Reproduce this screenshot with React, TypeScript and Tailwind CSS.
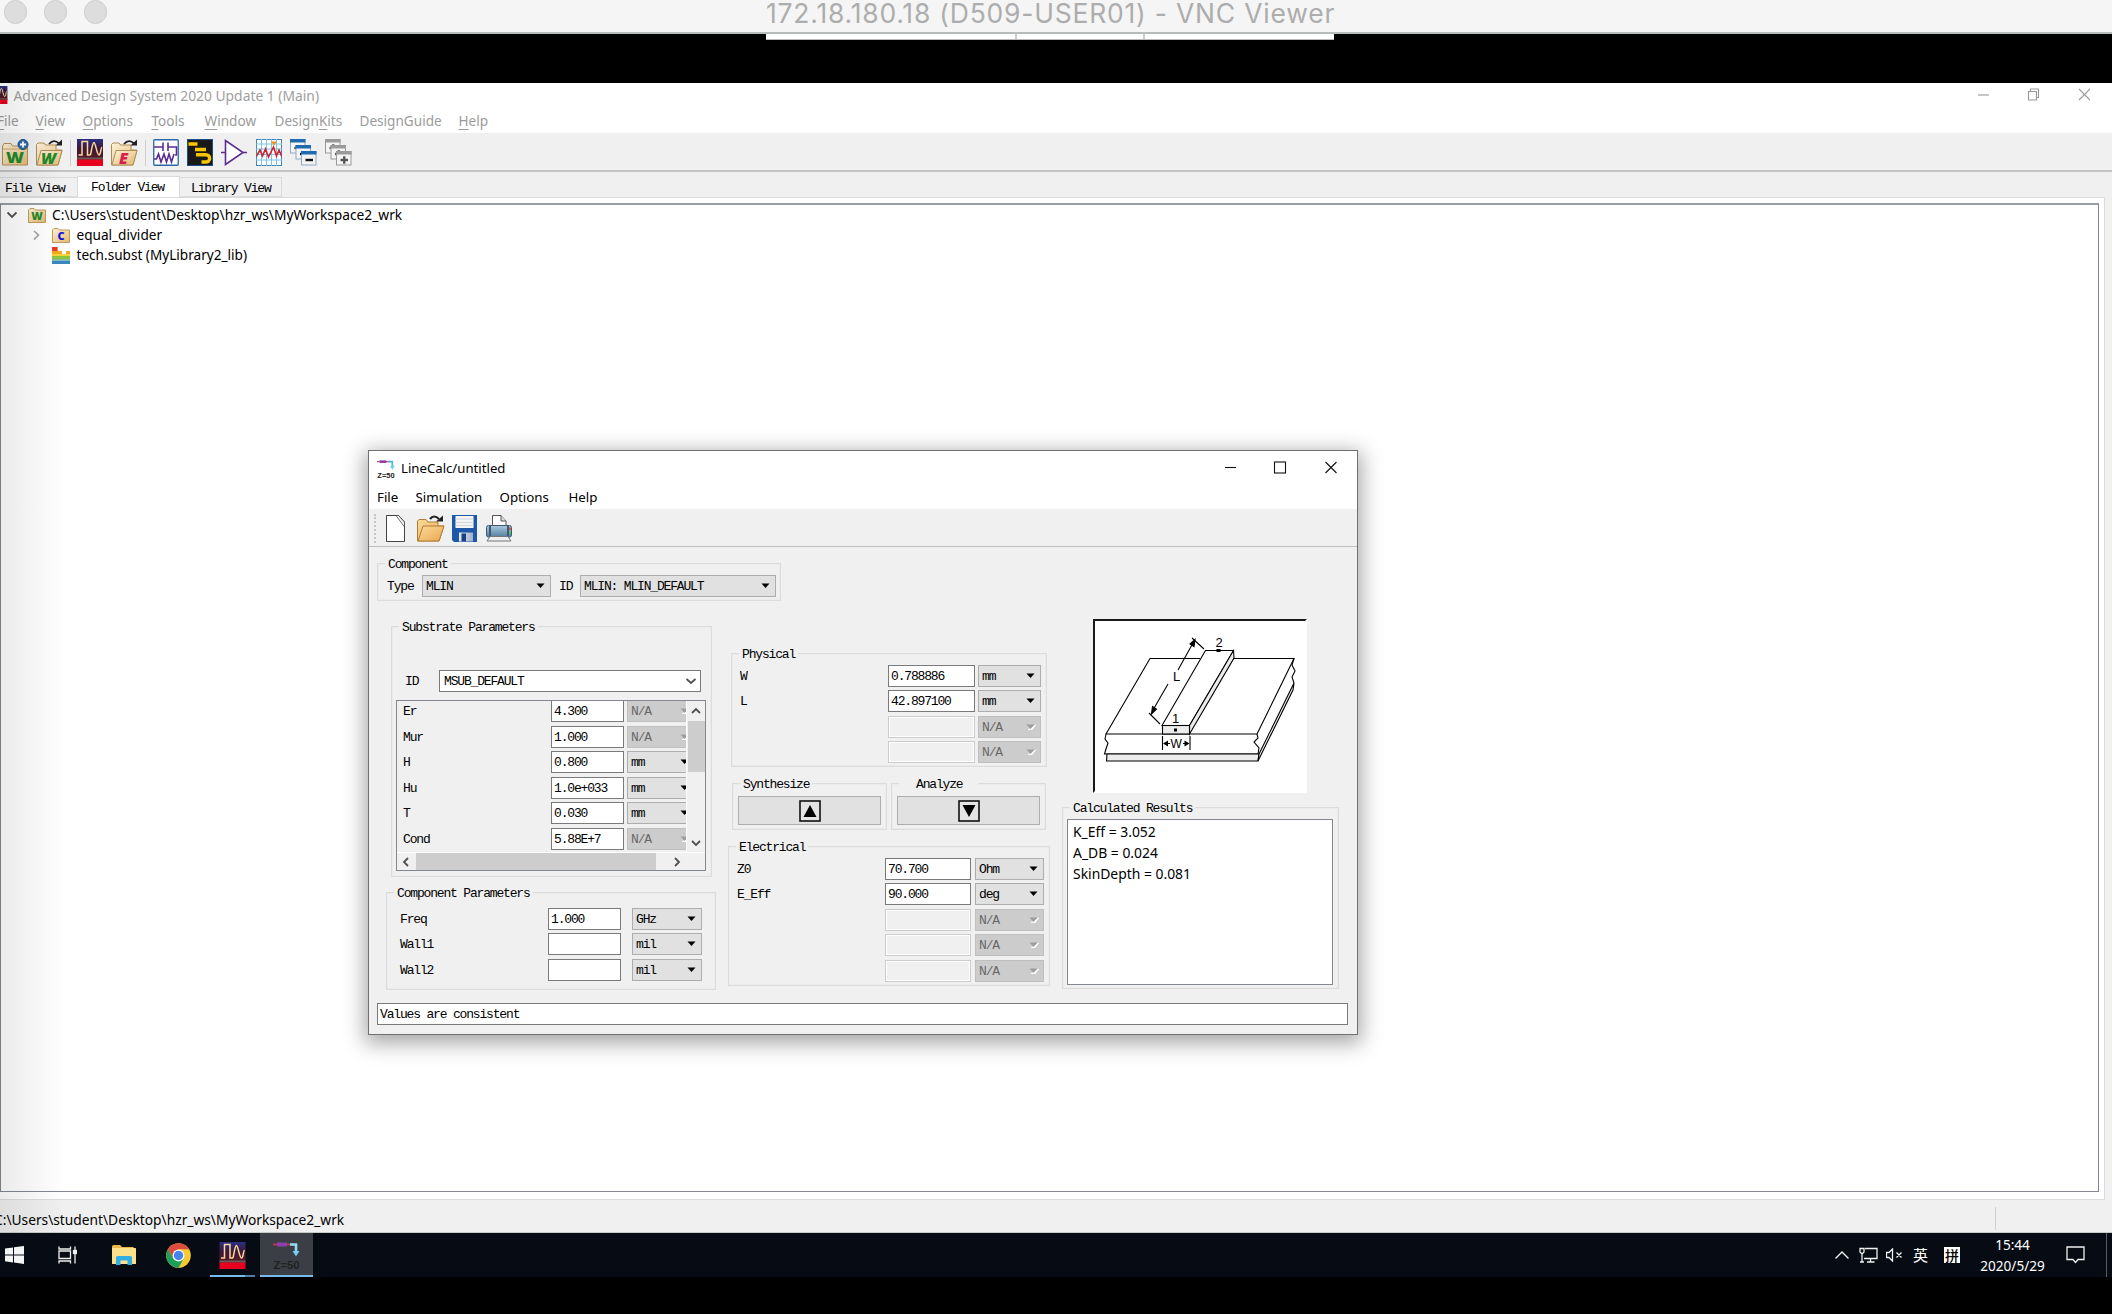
import React from "react";

const MONO = "block pt-[2px] font-['Liberation_Mono',monospace] text-[13px] tracking-[-1.17px] leading-[16px] whitespace-pre text-black";
const UI = "font-['Noto_Sans',sans-serif] leading-[20px] whitespace-pre";

function Arrow({ disabled = false }: { disabled?: boolean }) {
  return (
    <svg width="10" height="6" viewBox="0 0 10 6" className="shrink-0">
      {disabled && <path d="M2 6 L9.5 1 L6 5.8 Z" fill="#fff" stroke="#fff" />}
      <path d="M0.5 0.5 H8.5 L4.5 5 Z" fill={disabled ? "#9d9d9d" : "#000"} />
    </svg>
  );
}

function Select({ text, className, disabled = false }: { text: string; className: string; disabled?: boolean }) {
  return (
    <div
      className={
        "flex h-[22px] shrink-0 items-center justify-between border pl-[3px] pr-[4px] " +
        (disabled ? "border-[#bfbfbf] bg-[#cccccc] " : "border-[#adadad] bg-[#e1e1e1] ") +
        className
      }
    >
      <span className={MONO + (disabled ? " opacity-50" : "")}>{text}</span>
      <Arrow disabled={disabled} />
    </div>
  );
}

function Input({ text = "", className, disabled = false }: { text?: string; className: string; disabled?: boolean }) {
  return (
    <div
      className={
        "flex h-[22px] shrink-0 items-center border pl-[2px] " +
        (disabled ? "border-[#cccccc] bg-[#f0f0f0] shadow-[inset_0_0_0_1px_#fff] " : "border-[#7a7a7a] bg-white ") +
        className
      }
    >
      <span className={MONO}>{text}</span>
    </div>
  );
}

function Group({
  title,
  className,
  titleClass = "ml-[7px] px-[3px]",
  children,
}: {
  title: string;
  className: string;
  titleClass?: string;
  children: React.ReactNode;
}) {
  return (
    <div className={"flex shrink-0 flex-col border border-[#dcdcdc] shadow-[inset_0_0_0_0.5px_#e6e6e6] " + className}>
      <div className={"-mt-[9px] h-[16px] w-fit bg-[#f0f0f0] " + titleClass}>
        <span className={MONO}>{title}</span>
      </div>
      {children}
    </div>
  );
}

type RowData = { label: string; value?: string; unit: string; disabled?: boolean; unitDisabled?: boolean };

function Row({ r, inputW, gap, selectW }: { r: RowData; inputW: string; gap: string; selectW: string }) {
  return (
    <div className="mb-[3.4px] flex h-[22px] items-center">
      <span className={MONO + " flex-1"}>{r.label}</span>
      <Input text={r.value} className={inputW} disabled={r.disabled} />
      <div className={gap} />
      <Select text={r.unit} className={selectW} disabled={r.disabled || r.unitDisabled} />
    </div>
  );
}

const substrate: RowData[] = [
  { label: "Er", value: "4.300", unit: "N/A", unitDisabled: true },
  { label: "Mur", value: "1.000", unit: "N/A", unitDisabled: true },
  { label: "H", value: "0.800", unit: "mm" },
  { label: "Hu", value: "1.0e+033", unit: "mm" },
  { label: "T", value: "0.030", unit: "mm" },
  { label: "Cond", value: "5.88E+7", unit: "N/A", unitDisabled: true },
];
const component: RowData[] = [
  { label: "Freq", value: "1.000", unit: "GHz" },
  { label: "Wall1", unit: "mil" },
  { label: "Wall2", unit: "mil" },
];
const physical: RowData[] = [
  { label: "W", value: "0.788886", unit: "mm" },
  { label: "L", value: "42.897100", unit: "mm" },
  { label: "", unit: "N/A", disabled: true },
  { label: "", unit: "N/A", disabled: true },
];
const electrical: RowData[] = [
  { label: "Z0", value: "70.700", unit: "Ohm" },
  { label: "E_Eff", value: "90.000", unit: "deg" },
  { label: "", unit: "N/A", disabled: true },
  { label: "", unit: "N/A", disabled: true },
  { label: "", unit: "N/A", disabled: true },
];

/* ---------- icons ---------- */

function Gradients() {
  return (
    <svg width="0" height="0" className="absolute">
      <defs>
        <linearGradient id="folder" x1="0" y1="0" x2="1" y2="1">
          <stop offset="0" stopColor="#fdf3dc" />
          <stop offset="1" stopColor="#e3b870" />
        </linearGradient>
        <linearGradient id="orange" x1="0" y1="0" x2="1" y2="1">
          <stop offset="0" stopColor="#fbdb9a" />
          <stop offset="1" stopColor="#e9a750" />
        </linearGradient>
        <linearGradient id="ads" x1="0" y1="0" x2="0" y2="1">
          <stop offset="0" stopColor="#2b2f86" />
          <stop offset="0.45" stopColor="#3d1836" />
          <stop offset="1" stopColor="#5a1a22" />
        </linearGradient>
        <linearGradient id="printer" x1="0" y1="0" x2="0" y2="1">
          <stop offset="0" stopColor="#a9c9df" />
          <stop offset="1" stopColor="#54809f" />
        </linearGradient>
        <linearGradient id="paper" x1="0" y1="1" x2="1" y2="0">
          <stop offset="0.55" stopColor="#fff" />
          <stop offset="1" stopColor="#9a9a9a" />
        </linearGradient>
        <linearGradient id="metal" x1="0" y1="0" x2="1" y2="0">
          <stop offset="0" stopColor="#e6eaf0" />
          <stop offset="1" stopColor="#9fb0cc" />
        </linearGradient>
      </defs>
    </svg>
  );
}

function WorkspaceNew() {
  return (
    <svg width="27" height="27" viewBox="0 0 27 27">
      <path d="M0.5 26 V7 L2 4.500 H9 L10.500 7 H25.500 V26 Z" fill="url(#folder)" stroke="#b08d55" />
      <path d="M1 10 H25" stroke="#c9a76a" />
      <text x="4" y="23.500" fontFamily="Open Sans" fontWeight="800" fontSize="16.500" fill="#1f8a2c" textLength="18" lengthAdjust="spacingAndGlyphs">W</text>
      <circle cx="21" cy="5.500" r="5" fill="#2f6ea8" stroke="#1f4f80" />
      <path d="M21 2.500 V8.500 M18 5.500 H24" stroke="#fff" strokeWidth="1.800" />
    </svg>
  );
}

function FolderOpen({ letter, color }: { letter: string; color: string }) {
  return (
    <svg width="27" height="27" viewBox="0 0 27 27">
      <path d="M0.5 26 V5.500 L2 4 H8 L9.500 6 H20 V11 L26 11 L22 26 Z" fill="url(#folder)" stroke="#b08d55" />
      <path d="M1 26 L5 11.500 H26 L22 26 Z" fill="url(#folder)" stroke="#b08d55" />
      <text x={letter === "W" ? 5 : 8} y="25" fontFamily="Open Sans" fontWeight="800" fontStyle="italic" fontSize="16" fill={color}>{letter}</text>
      <path d="M13 5 Q18 -0.500 23 4.500" fill="none" stroke="#222" strokeWidth="1.800" />
      <path d="M19.500 6.500 H26 V0.500 Z" fill="#222" />
    </svg>
  );
}

function AdsIcon({ size = "h-[27px] w-[26px]" }: { size?: string }) {
  return (
    <svg viewBox="0 0 26 27" className={size}>
      <rect width="26" height="21" fill="url(#ads)" />
      <rect y="18.500" width="26" height="2" fill="#6b5a5a" />
      <rect y="20.500" width="26" height="6.500" fill="#e8001f" />
      <path d="M1.500 16 H5 V2.500 H10.500 V16 H13.500" fill="none" stroke="#f7d9a0" strokeWidth="1.500" />
      <path d="M13.500 16 C15 9 15.500 3.500 17 3.500 S20 16 22 16 S23.500 9 25 8" fill="none" stroke="#f7d9a0" strokeWidth="1.500" />
    </svg>
  );
}

function Schematic() {
  return (
    <svg width="26" height="27" viewBox="0 0 26 27">
      <rect x="0.750" y="0.750" width="24.500" height="25.500" rx="1" fill="#fff" stroke="#2a67a8" strokeWidth="1.300" />
      <path d="M1 8 H10 M10 3.500 V12 M15 3.500 V12 M15 8 H23.500 V16 H22 M1 20 H3.500 L5.500 15 L8 23 L11 15 L13.500 23 L16 15 L18.500 23 L21 15" fill="none" stroke="#5a2c91" strokeWidth="1.600" />
    </svg>
  );
}

function Layout() {
  return (
    <svg width="26" height="27" viewBox="0 0 26 27">
      <rect width="26" height="27" fill="#191919" />
      <rect width="25" height="26" x="0.500" y="0.500" fill="none" stroke="#1d4f8a" />
      <path d="M1.500 5 H10.500 M8 10.500 H19" stroke="#f7c600" strokeWidth="3.400" />
      <path d="M9 15.700 H19 A3.600 3.600 0 0 1 19 23 H14.500" fill="none" stroke="#f7c600" strokeWidth="3.400" />
    </svg>
  );
}

function Amp() {
  return (
    <svg width="26" height="27" viewBox="0 0 26 27">
      <path d="M4.500 1.500 V25.500 L22 13.500 Z" fill="#fff" stroke="#5a2c91" strokeWidth="1.600" />
      <path d="M0 13.500 H4.500 M22 13.500 H26" stroke="#5a2c91" strokeWidth="1.600" />
    </svg>
  );
}

function DataDisplay() {
  return (
    <svg width="26" height="27" viewBox="0 0 26 27">
      <rect x="0.500" y="0.500" width="25" height="26" fill="#fff" stroke="#3d86b8" />
      <path d="M5.500 0 V27 M10.500 0 V27 M15.500 0 V27 M20.500 0 V27 M0 5 H26 M0 10 H26 M0 15.500 H26 M0 21 H26" stroke="#7cc3e4" />
      <path d="M0.500 17 L4 11 L6.500 17 L9.500 10 L12.500 18 L17.500 8 L20.500 17 L23 11 L25.500 17" fill="none" stroke="#d0202c" strokeWidth="1.600" />
      <path d="M15 2.500 H21 L18 6.500 Z" fill="#f28c1a" />
    </svg>
  );
}

function Cascade({ color, plus }: { color: string; plus?: boolean }) {
  return (
    <svg width="27" height="27" viewBox="0 0 27 27">
      {[
        [0.5, 0.5],
        [6, 6.5],
        [11.5, 12.5],
      ].map(([x, y], i) => (
        <g key={i}>
          <rect x={x} y={y} width="14.500" height="13.500" fill="#f4f4f4" stroke={plus ? "#9a9a9a" : "#8fa9c4"} />
          <rect x={x - 0.5} y={y - 0.5} width="15.500" height="3.500" fill={color} />
          <path d={`M${x + 4} ${y + 8.5} h7.500`} stroke={plus ? "#555" : "#111"} strokeWidth="2.400" />
          {plus && <path d={`M${x + 7.75} ${y + 4.75} v7.500`} stroke="#555" strokeWidth="2.400" />}
        </g>
      ))}
    </svg>
  );
}

function LineCalcIcon({ dark = false, size }: { dark?: boolean; size: string }) {
  return (
    <svg viewBox="0 0 27 27" className={size}>
      <path d="M0 2.500 H21" stroke="#d8344c" strokeWidth="1.600" />
      <rect x="4" y="0.500" width="10" height="4" fill="#8b3fb0" />
      <path d="M17 2.500 H23 V9" fill="none" stroke={dark ? "#8fdcf5" : "#4db4dc"} strokeWidth="2.600" />
      <path d="M19.500 9 H26.500 L23 14.500 Z" fill="#6fd0f0" />
      <text x="0.500" y="26.500" fontFamily="Liberation Sans" fontWeight="700" fontSize="11" fill="#222" textLength="26" lengthAdjust="spacingAndGlyphs">Z=50</text>
    </svg>
  );
}

function Microstrip() {
  return (
    <svg width="211" height="170" viewBox="0 0 211 170" fill="none" stroke="#000" strokeWidth="1.100">
      <path d="M11 113 L55 37.500 H105 M138 37.500 H199 L162 113" />
      <path d="M162 113 H11 L10 118 L13 122 L11 128 L9.500 133 H163 L164 127 L159 121 L163 117 L162 113" />
      <path d="M12 133 L11.500 140 H163 L164 133 Z" fill="#ececec" />
      <path d="M164 133 L199 62 L198 69 L163 140 Z" fill="#ececec" />
      <path d="M199 37.500 L197 44 L200 50 L197 56 L199 62" />
      <path d="M67 104.500 L110.500 29.500 H138.500 L94.500 104.500 Z" fill="#fff" />
      <path d="M94.500 104.500 L138.500 29.500 L139 37 L94.500 113 Z" fill="#ececec" />
      <rect x="67.500" y="104.500" width="27" height="8.500" fill="#ececec" />
      <rect x="79" y="107.500" width="3" height="3" fill="#000" stroke="none" />
      <rect x="121.500" y="28" width="4" height="3" fill="#000" stroke="none" />
      <path d="M67.500 115 V129 M95 115 V129 M70 122.500 H75 M88 122.500 H93" />
      <path d="M68 122.500 L73 119.500 V125.500 Z M94.500 122.500 L89.500 119.500 V125.500 Z" fill="#000" stroke="none" />
      <path d="M83 49 L98 22 M73 63 L58 89" />
      <path d="M100 18.500 L99 25.500 L95 23 Z M56.500 93 L57.500 85.500 L61.500 88 Z" fill="#000" />
      <path d="M97 17 L109 28 M54 92 L65 103" />
      <g fill="#000" stroke="none" fontFamily="Liberation Sans" fontSize="13">
        <text x="78" y="60">L</text>
        <text x="120.500" y="25.500">2</text>
        <text x="77" y="101.500">1</text>
        <text x="75.500" y="127" fontSize="12">W</text>
      </g>
    </svg>
  );
}

function Chevron({ d, className = "" }: { d: string; className?: string }) {
  return (
    <svg width="10" height="10" viewBox="0 0 10 10" className={"shrink-0 " + className}>
      <path d={d} fill="none" stroke="#505050" strokeWidth="1.800" />
    </svg>
  );
}

/* ---------- dialog ---------- */

function LineCalcDialog() {
  return (
    <div className="absolute left-[368px] top-[450px] flex h-[585px] w-[990px] flex-col border border-[#707070] bg-[#f0f0f0] shadow-[0_5px_20px_3px_rgba(0,0,0,0.36)]">
      <div className="flex h-[58px] shrink-0 flex-col bg-white">
        <div className="flex h-[33px] items-center pl-[8px] pr-[20px]">
          <LineCalcIcon size="h-[18px] w-[18px] mt-[2px]" />
          <span className={UI + " ml-[6px] flex-1 text-[13.2px] text-black"}>LineCalc/untitled</span>
          <svg width="112" height="13" viewBox="0 0 112 13" fill="none" stroke="#111" strokeWidth="1.100">
            <path d="M0 6.500 H11" />
            <rect x="49.500" y="1" width="11" height="11" />
            <path d="M100.500 1 L111.500 12 M111.500 1 L100.500 12" />
          </svg>
        </div>
        <div className={UI + " flex h-[25px] items-center pl-[8px] pt-[1px] text-[13.3px] text-black"}>
          <span className="w-[38.500px]">File</span>
          <span className="w-[84px]">Simulation</span>
          <span className="w-[69px]">Options</span>
          <span>Help</span>
        </div>
      </div>
      <div className="flex h-[38px] shrink-0 items-center border-b border-b-[#bdbdbd] pl-[5px] pt-[2px]">
        <div className="h-[29px] w-[2px] border-l-2 border-dotted border-[#c4c4c4]" />
        <div className="ml-[10px] flex gap-[7px]">
          <svg width="24" height="27" viewBox="0 0 24 27">
            <path d="M0.500 0.500 H12.500 L18.500 7 V26.500 H0.500 Z" fill="#fff" stroke="#444" />
            <path d="M12.500 0.500 L18.500 7 V12 L10 0.500 Z" fill="url(#paper)" stroke="#444" strokeWidth="0.800" />
          </svg>
          <svg width="28" height="27" viewBox="0 0 28 27">
            <path d="M0.500 26 V6 L2 4.500 H9 L11 7 H21 V11 H27 L22 26 Z" fill="url(#orange)" stroke="#b27c35" />
            <path d="M1 26 L6 11 H27 L22 26 Z" fill="url(#orange)" stroke="#b27c35" />
            <path d="M13 4 Q17 -1 22 4" fill="none" stroke="#222" strokeWidth="2.200" />
            <path d="M19 6.500 H26 V0.500 Z" fill="#222" />
          </svg>
          <svg width="25" height="27" viewBox="0 0 25 27">
            <path d="M0 0 H25 V27 H2 L0 25 Z" fill="#1d57a8" />
            <rect x="3.500" y="1" width="18" height="12" fill="#f4f4f4" />
            <path d="M3.500 4 H21.500 M3.500 7.500 H21.500 M3.500 10.500 H21.500" stroke="#cfd6dd" />
            <rect x="7" y="17.500" width="14" height="9" fill="url(#metal)" />
            <rect x="9.500" y="18.500" width="4.500" height="8" fill="#1c3f86" />
          </svg>
          <svg width="26" height="27" viewBox="0 0 26 27" className="ml-[2px]">
            <path d="M6.500 12 V0.500 H15 L20 6 V12" fill="#fff" stroke="#555" />
            <path d="M15 0.500 V6 H20" fill="#ddd" stroke="#555" />
            <rect x="0.500" y="10.500" width="25" height="11.500" rx="2" fill="url(#printer)" stroke="#3d5a70" />
            <rect x="3" y="10.500" width="2" height="11.500" fill="#3d5a70" />
            <rect x="21" y="10.500" width="2" height="11.500" fill="#3d5a70" />
            <path d="M24 12.500 V15" stroke="#e33" strokeWidth="1.500" />
            <path d="M24 16 V19" stroke="#4c4" strokeWidth="1.500" />
            <path d="M4 21.500 H22 L25 26 H1 Z" fill="#efefef" stroke="#777" />
          </svg>
        </div>
      </div>

      <Group title="Component" className="ml-[8px] mt-[16px] h-[38px] w-[404px]">
        <div className="mt-[4px] flex items-center pl-[9px]">
          <span className={MONO + " w-[35px]"}>Type</span>
          <Select text="MLIN" className="w-[129px]" />
          <span className={MONO + " ml-[8px] w-[21px]"}>ID</span>
          <Select text="MLIN: MLIN_DEFAULT" className="w-[196px]" />
        </div>
      </Group>

      <div className="flex h-[389px] shrink-0 items-start">
        <div className="flex w-[348px] flex-col">
          <Group title="Substrate Parameters" className="ml-[22px] mt-[25px] h-[251px] w-[321px]">
            <div className="mt-[36px] flex items-center pl-[13px]">
              <span className={MONO + " w-[34px]"}>ID</span>
              <div className="flex h-[22px] w-[262px] items-center justify-between border border-[#7a7a7a] bg-white pl-[4px] pr-[4px]">
                <span className={MONO}>MSUB_DEFAULT</span>
                <Chevron d="M0.500 3 L5 7 L9.500 3" />
              </div>
            </div>
            <div className="ml-[4px] mt-[8px] flex h-[171px] w-[310px] flex-col overflow-hidden border border-[#828790]">
              <div className="flex h-[151px] shrink-0">
                <div className="w-[289px] overflow-hidden pl-[6px]">
                  <div className="-mt-[1px] flex w-[350px] flex-col">
                    {substrate.map((r) => (
                      <div key={r.label} className="mb-[3.500px] flex h-[22px] shrink-0 items-center">
                        <span className={MONO + " w-[148px]"}>{r.label}</span>
                        <Input text={r.value} className="w-[73px]" />
                        <div className="w-[3px]" />
                        <Select text={r.unit} className="w-[68px]" disabled={r.unitDisabled} />
                      </div>
                    ))}
                  </div>
                </div>
                <div className="flex w-[19px] flex-col items-center border-l border-white bg-[#f0f0f0]">
                  <Chevron d="M1 7 L5 3 L9 7" className="mt-[5px]" />
                  <div className="mt-[5px] h-[51px] w-[17px] bg-[#cdcdcd]" />
                  <div className="flex-1" />
                  <Chevron d="M1 3 L5 7 L9 3" className="mb-[4px]" />
                </div>
              </div>
              <div className="flex h-[18px] items-center border-t border-white">
                <Chevron d="M7 1 L3 5 L7 9" className="ml-[4px]" />
                <div className="ml-[5px] h-[17px] w-[240px] bg-[#cdcdcd]" />
                <Chevron d="M3 1 L7 5 L3 9" className="ml-[16px]" />
              </div>
            </div>
          </Group>
          <Group title="Component Parameters" className="ml-[17px] mt-[15px] h-[98px] w-[330px]">
            <div className="mt-[8px] flex flex-col pl-[13px] pr-[13px]">
              {component.map((r) => (
                <Row key={r.label} r={r} inputW="w-[73px]" gap="w-[11px]" selectW="w-[70px]" />
              ))}
            </div>
          </Group>
        </div>

        <div className="flex w-[334px] flex-col">
          <Group title="Physical" className="ml-[14px] mt-[52px] h-[114px] w-[316px]">
            <div className="mt-[4px] flex flex-col pl-[8px] pr-[5px]">
              {physical.map((r, i) => (
                <Row key={i} r={r} inputW="w-[87px]" gap="w-[3px]" selectW="w-[63px]" />
              ))}
            </div>
          </Group>
          <div className="mt-[16px] flex gap-[4px] pl-[15px]">
            <Group title="Synthesize" className="h-[47px] w-[155px]">
              <div className="mx-[5px] mt-[5px] flex h-[29px] items-center justify-center border border-[#adadad] bg-[#e1e1e1]">
                <svg width="22" height="22" viewBox="0 0 22 22">
                  <rect x="1" y="1" width="20" height="20" fill="#e4e4e4" stroke="#111" strokeWidth="1.600" />
                  <path d="M4.500 17 L11 5 L17.500 17 Z" fill="#000" />
                </svg>
              </div>
            </Group>
            <Group title="Analyze" className="h-[47px] w-[155px]" titleClass="ml-[7px] pl-[17px] pr-[16px]">
              <div className="mx-[5px] mt-[5px] flex h-[29px] items-center justify-center border border-[#adadad] bg-[#e1e1e1]">
                <svg width="22" height="22" viewBox="0 0 22 22">
                  <rect x="1" y="1" width="20" height="20" fill="#e4e4e4" stroke="#111" strokeWidth="1.600" />
                  <path d="M4.500 5 L11 17 L17.500 5 Z" fill="#000" />
                </svg>
              </div>
            </Group>
          </div>
          <Group title="Electrical" className="ml-[11px] mt-[16px] h-[140px] w-[322px]">
            <div className="mt-[4px] flex flex-col pl-[8px] pr-[5px]">
              {electrical.map((r, i) => (
                <Row key={i} r={r} inputW="w-[86px]" gap="w-[4px]" selectW="w-[69px]" />
              ))}
            </div>
          </Group>
        </div>

        <div className="flex flex-col">
          <div className="ml-[42px] mt-[18px] h-[174px] w-[214px] border-2 border-b-white border-l-[#1a1a1a] border-r-white border-t-[#1a1a1a] bg-white">
            <Microstrip />
          </div>
          <Group title="Calculated Results" className="ml-[11px] mt-[14px] h-[182px] w-[277px]">
            <div className={UI + " ml-[4px] mr-[5px] mt-[4px] flex h-[166px] flex-col border border-[#828790] bg-white pl-[5px] pt-[1px] text-[13.9px] text-black"}>
              <span className="h-[21px] leading-[21px]">K_Eff = 3.052</span>
              <span className="h-[21px] leading-[21px]">A_DB = 0.024</span>
              <span className="h-[21px] leading-[21px]">SkinDepth = 0.081</span>
            </div>
          </Group>
        </div>
      </div>

      <div className="ml-[8px] mt-[13px] flex h-[22px] w-[971px] items-center border border-[#7a7a7a] bg-white pl-[2px]">
        <span className={MONO}>Values are consistent</span>
      </div>
    </div>
  );
}

/* ---------- main window ---------- */

function Menu({ w, pre = "", u = "", post = "" }: { w: string; pre?: string; u?: string; post?: string }) {
  return (
    <span className={"shrink-0 " + w}>
      {pre}
      <span className="underline underline-offset-[3px]">{u}</span>
      {post}
    </span>
  );
}

function SmallFolder({ letter, color }: { letter: string; color: string }) {
  return (
    <svg width="18" height="15" viewBox="0 0 18 15">
      <path d="M0.500 14.500 V2 L2 0.500 H6 L7.500 2 H17.500 V14.500 Z" fill="url(#folder)" stroke="#c29a55" />
      <text x="9" y="12" textAnchor="middle" fontFamily="Open Sans" fontWeight="800" fontSize="11" fill={color}>{letter}</text>
    </svg>
  );
}

export default function App() {
  return (
    <div className="relative flex h-[1314px] w-[2112px] flex-col overflow-hidden bg-black">
      <Gradients />
      <header className="relative flex h-[34px] shrink-0 border-b-2 border-[#b9bdb9] bg-[#f5f5f5]">
        <div className="flex gap-[17px] pl-[4px]">
          <div className="h-[24px] w-[23px] rounded-full border border-[#cccccc] bg-[#dddddd]" />
          <div className="h-[24px] w-[23px] rounded-full border border-[#cccccc] bg-[#dddddd]" />
          <div className="h-[24px] w-[23px] rounded-full border border-[#cccccc] bg-[#dddddd]" />
        </div>
        <span className="-mt-[2px] ml-[659px] whitespace-pre font-['Inter',sans-serif] text-[26.5px] leading-[30px] tracking-[0.78px] text-[#adadad]">
          172.18.180.18 (D509-USER01) - VNC Viewer
        </span>
      </header>
      <div className="flex h-[49px] shrink-0 bg-black">
        <div className="ml-[766px] flex h-[6px] w-[568px] border-b border-[#bbb] bg-white">
          <div className="w-[251px] border-r-2 border-[#ccc]" />
          <div className="w-[128px] border-r-2 border-[#ccc]" />
        </div>
      </div>

      <main className="flex h-[1150px] shrink-0 flex-col bg-[#f0f0f0]">
        <div className="flex h-[51px] shrink-0 flex-col border-b border-[#f0f0f0] bg-white">
          <div className="flex h-[25px] items-center">
            <div className="-ml-[10px]">
              <AdsIcon size="h-[18px] w-[17.500px]" />
            </div>
            <span className={UI + " ml-[6px] mt-[1px] flex-1 text-[13.85px] text-[#a0a0a0]"}>Advanced Design System 2020 Update 1 (Main)</span>
            <svg width="112" height="13" viewBox="0 0 112 13" fill="none" stroke="#999" strokeWidth="1.100" className="-mt-[1px] mr-[22px]">
              <path d="M0 7 H11" />
              <path d="M50.500 3.500 H58.500 V12 H50.500 Z M52.500 3.500 V1 H60.500 V9.500 H58.500" />
              <path d="M101 1 L112 12 M112 1 L101 12" />
            </svg>
          </div>
          <div className={UI + " -ml-[3px] flex h-[26px] items-center pt-[2px] text-[13.6px] text-[#9b9b9b]"}>
            <Menu w="w-[38.500px]" u="F" post="ile" />
            <Menu w="w-[47px]" u="V" post="iew" />
            <Menu w="w-[69px]" u="O" post="ptions" />
            <Menu w="w-[53px]" u="T" post="ools" />
            <Menu w="w-[70px]" u="W" post="indow" />
            <Menu w="w-[85px]" pre="Design" u="K" post="its" />
            <Menu w="w-[99px]" pre="DesignGuide" />
            <Menu w="w-[40px]" u="H" post="elp" />
          </div>
        </div>
        <div className="flex h-[38px] shrink-0 items-center border-b-2 border-[#c4c4c4] pl-[2px] pt-[1px]">
          <WorkspaceNew />
          <div className="ml-[7px]"><FolderOpen letter="W" color="#1f8a2c" /></div>
          <div className="ml-[7px] h-[26px] w-px bg-[#d0d0d0]" />
          <div className="ml-[6px]"><AdsIcon /></div>
          <div className="ml-[8px]"><FolderOpen letter="E" color="#d8204f" /></div>
          <div className="ml-[7px] h-[26px] w-px bg-[#d0d0d0]" />
          <div className="ml-[7px] flex gap-[8.200px]">
            <Schematic />
            <Layout />
            <Amp />
            <DataDisplay />
            <Cascade color="#1f6bb0" />
            <Cascade color="#9a9a9a" plus />
          </div>
        </div>
        <div className="flex h-[25px] shrink-0 items-end">
          <div className="flex h-[20px] w-[77px] items-center border-b border-t border-[#dadada] pl-[5px]">
            <span className={MONO + " pt-[4px]"}>File View</span>
          </div>
          <div className="flex h-[21px] w-[103px] items-center border border-b-0 border-[#dadada] bg-white pl-[13px]">
            <span className={MONO}>Folder View</span>
          </div>
          <div className="flex h-[20px] w-[102px] items-center border border-l-0 border-[#dadada] pl-[11px]">
            <span className={MONO + " pt-[4px]"}>Library View</span>
          </div>
        </div>
        <div className="mr-[7px] flex h-[1003px] shrink-0 flex-col border-b border-r border-t border-[#dcdcdc] bg-white pb-[7px] pr-[5px] pt-[5px]">
          <div className="flex flex-1 flex-col border border-t-2 border-[#828790] border-t-[#9a9ea5] bg-white">
            <div className="flex h-[20px] items-center pl-[6px]">
              <Chevron d="M0.500 2.500 L5 7 L9.500 2.500" />
              <div className="ml-[11px]"><SmallFolder letter="W" color="#1f8a2c" /></div>
              <span className={UI + " ml-[6px] text-[13.75px] text-black"}>C:\Users\student\Desktop\hzr_ws\MyWorkspace2_wrk</span>
            </div>
            <div className="flex h-[20px] items-center pl-[30px]">
              <svg width="10" height="10" viewBox="0 0 10 10"><path d="M3 1 L7.500 5 L3 9.500" fill="none" stroke="#a0a0a0" strokeWidth="1.600" /></svg>
              <div className="ml-[11px]"><SmallFolder letter="C" color="#1010e0" /></div>
              <span className={UI + " ml-[6.500px] text-[13.6px] text-black"}>equal_divider</span>
            </div>
            <div className="flex h-[20px] items-center pl-[51px]">
              <svg width="18" height="17" viewBox="0 0 18 17">
                <path d="M0 0 H5.500 V4 H10 V7 H14 V4 H18 V17 H0 Z" fill="#f6a81c" />
                <rect width="5.500" height="4" fill="#e8392e" />
                <rect y="7" width="18" height="2" fill="#f7d33a" />
                <rect y="9" width="18" height="3.500" fill="#8cc63e" />
                <rect y="12.500" width="18" height="4.500" fill="#3a86c0" />
                <rect y="12.500" width="18" height="1.200" fill="#9fd6c0" />
              </svg>
              <span className={UI + " ml-[6.500px] text-[13.6px] text-black"}>tech.subst (MyLibrary2_lib)</span>
            </div>
          </div>
        </div>
        <div className="flex flex-1 items-center border-b border-[#c8ccc8]">
          <span className={UI + " -ml-[6px] mt-[8px] text-[13.75px] text-black"}>C:\Users\student\Desktop\hzr_ws\MyWorkspace2_wrk</span>
          <div className="ml-auto mr-[116px] mt-[5px] h-[23px] w-px bg-[#cfcfcf]" />
        </div>
      </main>

      <footer className="flex h-[44px] shrink-0 items-center bg-[#070c14]">
        <svg width="19" height="18" viewBox="0 0 19 18" className="ml-[5px]" fill="#f4f4f4">
          <path d="M0 2.600 L8 1.500 V8.400 H0 Z M9 1.300 L19 0 V8.400 H9 Z M0 9.400 H8 V16.400 L0 15.300 Z M9 9.400 H19 V18 L9 16.600 Z" />
        </svg>
        <svg width="19" height="18" viewBox="0 0 19 18" className="ml-[34px]" fill="none" stroke="#f0f0f0" strokeWidth="1.300">
          <path d="M1 0.500 V3 H12.500 V0.500 M1 17.500 V15 H12.500 V17.500 M1 5 H12.500 V12.500 H1 Z M17 0.500 V17.500" />
          <rect x="15.500" y="4.500" width="3" height="3" fill="#f0f0f0" />
        </svg>
        <svg width="24" height="20" viewBox="0 0 24 20" className="ml-[35px]">
          <path d="M0 1.500 Q0 0 1.500 0 H8 L10 2 H21 Q22 2 22 3.500 V5 H0 Z" fill="#e8b84a" />
          <rect y="3" width="24" height="16" rx="0.500" fill="#fde08a" />
          <path d="M4 20 V12.500 Q4 11 5.500 11 H18.500 Q20 11 20 12.500 V20 H15.500 V15.500 H8.500 V20 Z" fill="#33aee4" />
        </svg>
        <svg width="25" height="25" viewBox="0 0 25 25" className="ml-[30px]">
          <circle cx="12.500" cy="12.500" r="12.300" fill="#f7c934" />
          <path d="M1.850 6.350 A12.300 12.300 0 0 1 23.150 6.350 H12.500 L7.200 15.600 Z" fill="#dd4b3e" />
          <path d="M1.850 6.350 A12.300 12.300 0 0 0 12.500 24.800 L17.800 15.600 L12.500 18 L7.200 15.600 Z" fill="#1d9f5c" />
          <circle cx="12.500" cy="12.500" r="5.900" fill="#fff" />
          <circle cx="12.500" cy="12.500" r="4.700" fill="#4486ee" />
        </svg>
        <div className="ml-[19px] flex h-[44px] w-[45px] flex-col items-center">
          <AdsIcon size="mt-[9px] h-[27px] w-[27px]" />
          <div className="mt-auto flex w-full">
            <div className="h-[2px] w-[35px] bg-[#76b9ed]" />
            <div className="h-[2px] flex-1 bg-[#4f7fa6]" />
          </div>
        </div>
        <div className="ml-[5px] flex h-[44px] w-[53px] flex-col items-center bg-[#3b3e44]">
          <LineCalcIcon dark size="mt-[9px] h-[27px] w-[27px]" />
          <div className="mt-auto h-[2px] w-full bg-[#76b9ed]" />
        </div>
        <div className="ml-auto flex h-full items-center text-white">
          <svg width="14" height="8" viewBox="0 0 14 8" fill="none" stroke="#f0f0f0" strokeWidth="1.400"><path d="M0.500 7.500 L7 1 L13.500 7.500" /></svg>
          <svg width="19" height="16" viewBox="0 0 19 16" className="ml-[10px]" fill="none" stroke="#f0f0f0" strokeWidth="1.300">
            <path d="M6 1.500 H18 V11.500 H5 M11.500 11.500 V15 M8 15 H15.500 M3 7 V15 M1 1.500 H5 V5 L3 7 L1 5 Z M1 15 H5" />
          </svg>
          <svg width="17" height="14" viewBox="0 0 17 14" className="ml-[8px]" fill="none" stroke="#f0f0f0" strokeWidth="1.300">
            <path d="M0.500 4.500 H3 L6.500 1 V13 L3 9.500 H0.500 Z M10.500 4.500 L15.500 9.500 M15.500 4.500 L10.500 9.500" />
          </svg>
          <span className="ml-[10px] font-['Noto_Sans_CJK_SC',sans-serif] text-[15px] leading-[18px]">英</span>
          <span className="ml-[16px] flex h-[16px] w-[16px] items-center justify-center bg-white font-['Noto_Sans_CJK_SC',sans-serif] text-[14px] font-medium leading-[16px] text-black">拼</span>
          <div className="ml-[19px] flex w-[67px] flex-col items-center whitespace-nowrap font-['Noto_Sans',sans-serif] text-[13.6px] leading-[21px]">
            <span>15:44</span>
            <span>2020/5/29</span>
          </div>
          <svg width="19" height="18" viewBox="0 0 19 18" className="ml-[20px]" fill="none" stroke="#f0f0f0" strokeWidth="1.300">
            <path d="M1 1 H18 V13.500 H12 L9.500 16.500 L7 13.500 H1 Z" />
          </svg>
          <div className="ml-[21px] mr-[5px] h-full w-px bg-[#5a5d62]" />
        </div>
      </footer>

      <div className="pointer-events-none absolute left-0 top-[83px] h-[1150px] w-[65px] bg-gradient-to-r from-black/8 to-transparent" />
      <LineCalcDialog />
    </div>
  );
}
